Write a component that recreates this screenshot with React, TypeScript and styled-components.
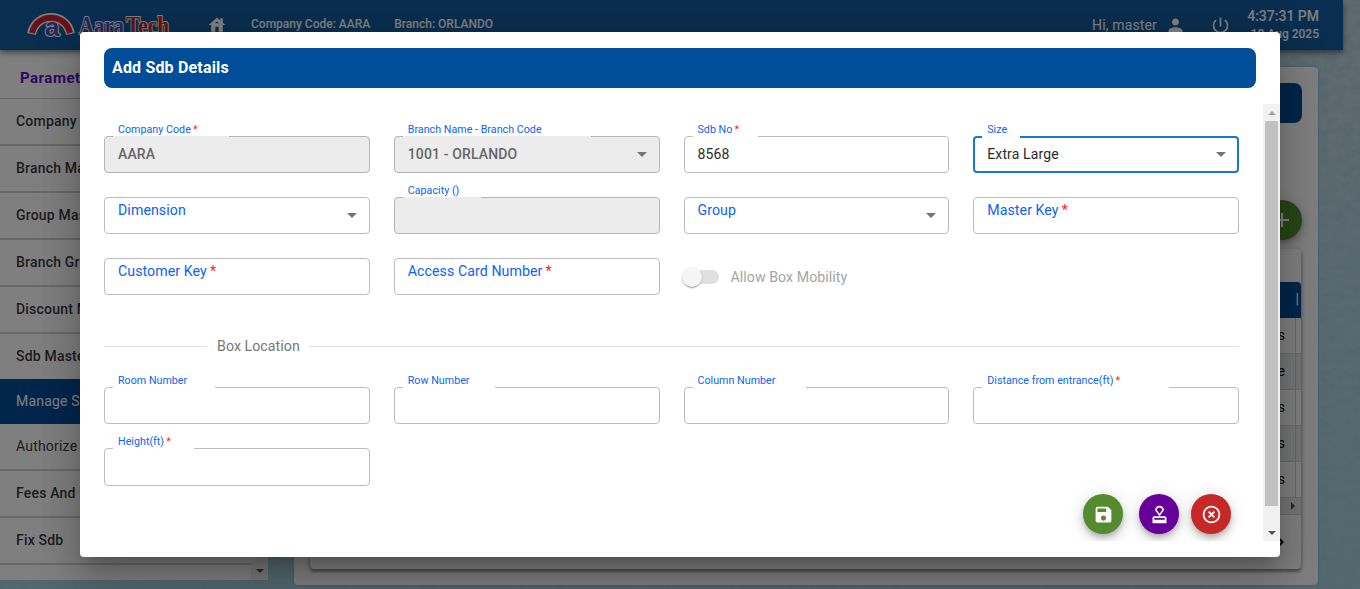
import React from "react";
import styled, { createGlobalStyle, css } from "styled-components";
import {
  MdAdd,
  MdArrowDropDown,
  MdChevronRight,
  MdHighlightOff,
  MdHouse,
  MdOutlineApproval,
  MdPerson,
  MdPowerSettingsNew,
  MdSave,
} from "react-icons/md";

const GlobalStyle = createGlobalStyle`
  *, *::before, *::after { box-sizing: border-box; }
  body {
    margin: 0;
    overflow: hidden;
    background: #afd6e6;
    font-family: Roboto, "Liberation Sans", sans-serif;
    font-size: 14px;
    color: rgba(0, 0, 0, 0.87);
  }
`;

/* ---------- page behind the dialog ---------- */

const Page = styled.div`
  position: relative;
  height: 589px;
  overflow: hidden;
  display: flex;
  flex-direction: column;
`;

const Texture = styled.svg`
  position: absolute;
  inset: 0;
  width: 100%;
  height: 100%;
`;

const TopBar = styled.header`
  position: relative;
  flex: none;
  display: flex;
  align-items: flex-start;
  width: 1343px;
  height: 50px;
  padding: 0 24px 0 26px;
  background: #145da0;
  color: #fff;
  box-shadow: 0 2px 4px -1px rgba(0, 0, 0, 0.3), 0 4px 5px rgba(0, 0, 0, 0.2),
    0 1px 10px rgba(0, 0, 0, 0.16);
  z-index: 1;
`;

const Logo = styled.svg`
  flex: none;
  width: 150px;
  height: 50px;
`;

const HomeLink = styled.span`
  display: flex;
  margin: 15px 0 0 31px;
  font-size: 20px;
`;

const BarText = styled.span<{ $left: number }>`
  margin: 16px 0 0 ${(p) => p.$left}px;
  font-size: 12px;
  font-weight: 500;
  line-height: 16px;
  white-space: nowrap;
`;

const UserArea = styled.div`
  display: flex;
  align-items: flex-start;
  margin-left: auto;
`;

const Greeting = styled.span`
  margin-top: 16px;
  font-size: 14px;
  line-height: 18px;
  letter-spacing: 0.15px;
`;

const UserIcon = styled.span<{ $left: number; $size: number }>`
  display: flex;
  margin: 15px 0 0 ${(p) => p.$left}px;
  font-size: ${(p) => p.$size}px;
`;

const Clock = styled.div`
  width: 72px;
  margin-left: 16px;
  padding-top: 7px;
  text-align: right;
  font-size: 14px;
  font-weight: 500;
  line-height: 18px;
  white-space: nowrap;
`;

const ClockDate = styled.div`
  font-size: 12px;
  font-weight: 500;
`;

const Body = styled.div`
  position: relative;
  display: flex;
  align-items: flex-start;
`;

const Sidebar = styled.aside`
  display: flex;
  width: 268px;
  height: 530px;
  background: #fff;
`;

const Menu = styled.nav`
  flex: 1;
`;

const MenuTitle = styled.div`
  height: 49px;
  padding: 8px 0 0 20px;
  border-bottom: 1px solid #d0d0d0;
  color: #5a0fc8;
  font-weight: 700;
  font-size: 15px;
  line-height: 40px;
  letter-spacing: 0.5px;
`;

const MenuItem = styled.div<{ $kind?: "plain" | "active"; $line?: boolean }>`
  height: ${(p) => (p.$line ? 47 : 45)}px;
  padding-left: 16px;
  border-bottom: ${(p) => (p.$line ? "2px solid #d0d0d0" : "0")};
  background: ${(p) => (p.$kind === "active" ? "#004d99" : "#fff")};
  color: ${(p) => (p.$kind === "active" ? "#fff" : "rgba(0,0,0,0.8)")};
  font-weight: ${(p) => (p.$kind ? 400 : 500)};
  line-height: 45px;
  letter-spacing: 0.2px;
  white-space: nowrap;
`;

const MenuScroll = styled.div`
  display: flex;
  align-items: flex-end;
  justify-content: center;
  width: 17px;
  padding-bottom: 7px;
  background: #f1f1f1;
`;

const Content = styled.main`
  width: 1024px;
  height: 518px;
  margin: 17px 0 0 26px;
  padding: 16px;
  border-radius: 4px;
  background: #fff;
  box-shadow: 0 0 2px #3fa9cf;
`;

const ContentTitle = styled.div`
  height: 40px;
  border-radius: 8px;
  background: #004d99;
`;

const AddRow = styled.div`
  display: flex;
  justify-content: flex-end;
  margin-top: 77px;
`;

const TableCard = styled.section`
  height: 320px;
  margin: 9px 1px 0 0;
  padding-top: 33px;
  border-radius: 4px;
  background: #fff;
  box-shadow: 0 3px 3px rgba(0, 0, 0, 0.3), 0 1px 5px rgba(0, 0, 0, 0.3);
`;

const TableHead = styled.div`
  height: 36px;
  padding: 8px 2px 0 0;
  border-radius: 4px 4px 0 0;
  background: #004d99;
  color: #fff;
  font-weight: 700;
  text-align: right;
  line-height: 18px;
`;

const TableRow = styled.div<{ $odd?: boolean }>`
  display: flex;
  justify-content: flex-end;
  height: 36px;
  border-bottom: 1px solid #d6d6d6;
  background: ${(p) => (p.$odd ? "#eaeeee" : "#fff")};
`;

const TableCell = styled.div`
  width: 60px;
  margin-right: 5px;
  padding-right: 10px;
  border-right: 1px solid #d0d0d0;
  text-align: right;
  line-height: 35px;
  color: #000;
`;

const TableScroll = styled.div`
  display: flex;
  justify-content: flex-end;
  align-items: center;
  height: 17px;
  padding-right: 6px;
  border-bottom: 1px solid #cfcfcf;
  background: #ededed;
`;

const Pager = styled.div`
  display: flex;
  justify-content: flex-end;
  padding: 15px 9px 0 0;
  font-size: 24px;
  color: #000;
`;

/* ---------- shared ---------- */

const Triangle = styled.i<{ $dir: "up" | "down" | "right"; $color: string }>`
  width: 0;
  height: 0;
  border: 4px solid transparent;
  ${(p) =>
    p.$dir === "up" &&
    css`
      border-top: 0;
      border-bottom-color: ${p.$color};
    `}
  ${(p) =>
    p.$dir === "down" &&
    css`
      border-bottom: 0;
      border-top-color: ${p.$color};
    `}
  ${(p) =>
    p.$dir === "right" &&
    css`
      border-right: 0;
      border-left-color: ${p.$color};
    `}
`;

const Fab = styled.button<{ $color: string; $size?: number }>`
  display: flex;
  align-items: center;
  justify-content: center;
  width: 40px;
  height: 40px;
  padding: 0;
  border: 0;
  border-radius: 50%;
  background: ${(p) => p.$color};
  color: #fff;
  font-size: ${(p) => p.$size ?? 21}px;
  box-shadow: 0 3px 5px -1px rgba(0, 0, 0, 0.2), 0 6px 10px rgba(0, 0, 0, 0.14),
    0 1px 18px rgba(0, 0, 0, 0.12);
`;

/* ---------- dialog ---------- */

const Backdrop = styled.div`
  position: absolute;
  inset: 0;
  z-index: 5;
  display: flex;
  justify-content: center;
  align-items: flex-start;
  padding-top: 32px;
  background: rgba(0, 0, 0, 0.5);
`;

const Dialog = styled.div`
  display: flex;
  flex-direction: column;
  width: 1200px;
  height: 525px;
  padding-top: 16px;
  border-radius: 4px;
  background: #fff;
  box-shadow: 0 11px 15px -7px rgba(0, 0, 0, 0.2),
    0 24px 38px 3px rgba(0, 0, 0, 0.14), 0 9px 46px 8px rgba(0, 0, 0, 0.12);
`;

const DialogTitle = styled.h2`
  flex: none;
  height: 40px;
  margin: 0 24px 16px;
  padding-left: 8px;
  border-radius: 8px;
  background: #004d99;
  color: #fff;
  font-size: 16px;
  font-weight: 700;
  line-height: 39px;
  letter-spacing: 0.17px;
`;

const ScrollArea = styled.div`
  display: flex;
  height: 437px;
  overflow: hidden;
`;

const Form = styled.form`
  flex: 1;
  padding: 32px 24px 0;
`;

const FieldGrid = styled.div<{ $rows?: string }>`
  display: grid;
  grid-template-columns: repeat(4, 1fr);
  grid-template-rows: ${(p) => p.$rows ?? "none"};
  grid-auto-rows: 37px;
  column-gap: 24px;
  row-gap: 24px;
`;

const Control = styled.div<{ $disabled?: boolean; $focused?: boolean }>`
  position: relative;
  display: flex;
  align-items: center;
  justify-content: space-between;
  padding: 0 5px 2px 13px;
  border-radius: 4px;
  border: 1px solid ${(p) => (p.$disabled ? "#b5b5b5" : "#bdbdbd")};
  background: ${(p) => (p.$disabled ? "#ececec" : "#fff")};
  ${(p) =>
    p.$focused &&
    css`
      border: 2px solid #1976d2;
      padding: 0 4px 2px 12px;
    `}
`;

const Notch = styled.span<{ $width: number; $focused?: boolean; $disabled?: boolean }>`
  position: absolute;
  left: ${(p) => (p.$focused ? 7 : 8)}px;
  top: ${(p) => (p.$focused ? -2 : -1)}px;
  width: ${(p) => p.$width}px;
  height: ${(p) => (p.$focused ? 2 : 1)}px;
  background: ${(p) => (p.$disabled ? "#ececec" : "#fff")};
`;

const Label = styled.label<{ $floating?: boolean; $focused?: boolean }>`
  position: absolute;
  left: ${(p) => (p.$focused ? 12 : 13)}px;
  top: ${(p) => (p.$floating ? (p.$focused ? -16 : -15) : 3)}px;
  font-size: ${(p) => (p.$floating ? 10.7 : 14.2)}px;
  letter-spacing: ${(p) => (p.$floating ? 0.02 : 0.06)}px;
  line-height: ${(p) => (p.$floating ? 15 : 18)}px;
  color: #0d63f3;
  white-space: nowrap;
`;

const Star = styled.span`
  margin-left: -0.5px;
  color: #f22;
`;

const Value = styled.span<{ $disabled?: boolean }>`
  font-size: 14px;
  letter-spacing: 0.13px;
  font-weight: ${(p) => (p.$disabled ? 500 : 400)};
  color: ${(p) => (p.$disabled ? "#666" : "#2b2b2b")};
`;

const Caret = styled.span`
  display: flex;
  margin-left: auto;
  font-size: 24px;
  color: #757575;
`;

const SwitchRow = styled.div`
  display: flex;
  align-items: center;
  gap: 12px;
  padding-left: 2px;
  color: #a5a5a5;
  font-size: 14.2px;
  letter-spacing: 0.05px;
  line-height: 18px;
`;

const Track = styled.span`
  display: flex;
  align-items: center;
  width: 33px;
  height: 14px;
  border-radius: 7px;
  background: #e0e0e0;
`;

const Thumb = styled.span`
  flex: none;
  width: 20px;
  height: 20px;
  margin-left: -4px;
  border-radius: 50%;
  background: #f5f5f5;
  box-shadow: 0 2px 1px -1px rgba(0, 0, 0, 0.2), 0 1px 1px rgba(0, 0, 0, 0.14),
    0 1px 3px rgba(0, 0, 0, 0.12);
`;

const Divider = styled.div`
  display: flex;
  align-items: center;
  height: 20px;
  margin: 41px 0 31px;
  color: #777;
  font-size: 14.2px;
  letter-spacing: 0.05px;
  white-space: nowrap;
  &::before,
  &::after {
    content: "";
    height: 1px;
    background: #e0e0e0;
  }
  &::before {
    width: 103px;
    margin-right: 10px;
  }
  &::after {
    flex: 1;
    margin-left: 9px;
  }
`;

const Actions = styled.div`
  display: flex;
  justify-content: flex-end;
  margin-top: 8px;
  padding-right: 8px;
  ${Fab}:nth-child(2) {
    margin: 0 12px 0 16px;
  }
`;

const ScrollBar = styled.div`
  display: flex;
  flex-direction: column;
  align-items: center;
  width: 17px;
  background: #f1f1f1;
`;

const ScrollButton = styled.span`
  display: flex;
  align-items: center;
  justify-content: center;
  height: 17px;
  &:last-child {
    margin-top: auto;
  }
`;

const ScrollThumb = styled.span`
  width: 13px;
  height: 385px;
  background: #c1c1c1;
`;

interface FieldProps {
  label: string;
  required?: boolean;
  value?: string;
  notch?: number;
  select?: boolean;
  disabled?: boolean;
  focused?: boolean;
}

function Field({ label, required, value, notch, select, disabled, focused }: FieldProps) {
  return (
    <Control $disabled={disabled} $focused={focused}>
      {notch && <Notch $width={notch} $focused={focused} $disabled={disabled} />}
      <Label $floating={!!notch} $focused={focused}>
        {label}
        {required && <Star> *</Star>}
      </Label>
      {value && <Value $disabled={disabled}>{value}</Value>}
      {select && (
        <Caret>
          <MdArrowDropDown />
        </Caret>
      )}
    </Control>
  );
}

const masters = [
  "Company Master",
  "Branch Master",
  "Group Master",
  "Branch Group",
  "Discount Master",
];

const cells = ["s", "e", "s", "s", "s"];

export default function App() {
  return (
    <Page>
      <GlobalStyle />
      <Texture aria-hidden="true">
        <filter id="paper" x="0" y="0" width="100%" height="100%">
          <feTurbulence type="fractalNoise" baseFrequency="0.11 0.14" numOctaves="5" seed="8" />
          <feColorMatrix values="0 0 0 0 0.35  0 0 0 0 0.6  0 0 0 0 0.72  1.3 0 0 0 -0.42" />
        </filter>
        <linearGradient id="tint" x1="0" y1="0" x2="0" y2="1">
          <stop offset="0" stopColor="#c2d6de" />
          <stop offset="1" stopColor="#aacfde" />
        </linearGradient>
        <rect width="100%" height="100%" fill="url(#tint)" />
        <rect width="100%" height="100%" filter="url(#paper)" />
      </Texture>

      <TopBar>
        <Logo viewBox="26 0 150 50">
          <path d="M31.5 34 C36 12 66 12 70.5 34" fill="none" stroke="#fff" strokeWidth="9" />
          <path d="M32 33 C37 12.500 65 12.500 70 33" fill="none" stroke="#d5202c" strokeWidth="6" />
          <g
            fontFamily="'Liberation Serif', serif"
            fontWeight="700"
            stroke="#fff"
            strokeWidth="2"
            strokeLinejoin="round"
            paintOrder="stroke"
          >
            <text x="45" y="36" fontSize="26" fontFamily="'Liberation Sans', sans-serif" fill="#4a50b8">a</text>
            <text x="79" y="34" fontSize="26" textLength="45" lengthAdjust="spacingAndGlyphs" fill="#4a50b8">Aara</text>
            <text x="126" y="34" fontSize="26" textLength="43" lengthAdjust="spacingAndGlyphs" fill="#d5202c">Tech</text>
          </g>
        </Logo>
        <HomeLink>
          <MdHouse />
        </HomeLink>
        <BarText $left={24}>Company Code: AARA</BarText>
        <BarText $left={24}>Branch: ORLANDO</BarText>
        <UserArea>
          <Greeting>Hi, master</Greeting>
          <UserIcon $left={8} $size={21}>
            <MdPerson />
          </UserIcon>
          <UserIcon $left={24} $size={21}>
            <MdPowerSettingsNew />
          </UserIcon>
          <Clock>
            4:37:31 PM
            <ClockDate>18 Aug 2025</ClockDate>
          </Clock>
        </UserArea>
      </TopBar>

      <Body>
        <Sidebar>
          <Menu>
            <MenuTitle>Parameter</MenuTitle>
            {masters.map((name) => (
              <MenuItem key={name} $line>
                {name}
              </MenuItem>
            ))}
            <MenuItem>Sdb Master</MenuItem>
            <MenuItem $kind="active">Manage Sdb</MenuItem>
            <MenuItem $kind="plain" $line>
              Authorize Sdb
            </MenuItem>
            <MenuItem $line>Fees And Charges</MenuItem>
            <MenuItem $line>Fix Sdb</MenuItem>
          </Menu>
          <MenuScroll>
            <Triangle $dir="down" $color="#505050" />
          </MenuScroll>
        </Sidebar>
        <Content>
          <ContentTitle />
          <AddRow>
            <Fab $color="#558b2f" $size={24}>
              <MdAdd />
            </Fab>
          </AddRow>
          <TableCard>
            <TableHead>|</TableHead>
            {cells.map((cell, i) => (
              <TableRow key={i} $odd={i % 2 === 1}>
                <TableCell>{cell}</TableCell>
              </TableRow>
            ))}
            <TableScroll>
              <Triangle $dir="right" $color="#505050" />
            </TableScroll>
            <Pager>
              <MdChevronRight />
            </Pager>
          </TableCard>
        </Content>
      </Body>

      <Backdrop>
        <Dialog role="dialog">
          <DialogTitle>Add Sdb Details</DialogTitle>
          <ScrollArea>
            <Form>
              <FieldGrid>
                <Field label="Company Code" required value="AARA" notch={116} disabled />
                <Field label="Branch Name - Branch Code" value="1001 - ORLANDO" notch={188} select disabled />
                <Field label="Sdb No" required value="8568" notch={65} />
                <Field label="Size" value="Extra Large" notch={38} select focused />
                <Field label="Dimension" select />
                <Field label="Capacity ()" notch={78} disabled />
                <Field label="Group" select />
                <Field label="Master Key" required />
                <Field label="Customer Key" required />
                <Field label="Access Card Number" required />
                <SwitchRow>
                  <Track>
                    <Thumb />
                  </Track>
                  Allow Box Mobility
                </SwitchRow>
              </FieldGrid>
              <Divider>Box Location</Divider>
              <FieldGrid $rows="37px 38px">
                <Field label="Room Number" notch={102} />
                <Field label="Row Number" notch={92} />
                <Field label="Column Number" notch={113} />
                <Field label="Distance from entrance(ft)" required notch={187} />
                <Field label="Height(ft)" required notch={81} />
              </FieldGrid>
              <Actions>
                <Fab type="button" $color="#558b2f">
                  <MdSave />
                </Fab>
                <Fab type="button" $color="#660099">
                  <MdOutlineApproval />
                </Fab>
                <Fab type="button" $color="#c62828">
                  <MdHighlightOff />
                </Fab>
              </Actions>
            </Form>
            <ScrollBar>
              <ScrollButton>
                <Triangle $dir="up" $color="#a3a3a3" />
              </ScrollButton>
              <ScrollThumb />
              <ScrollButton>
                <Triangle $dir="down" $color="#505050" />
              </ScrollButton>
            </ScrollBar>
          </ScrollArea>
        </Dialog>
      </Backdrop>
    </Page>
  );
}
